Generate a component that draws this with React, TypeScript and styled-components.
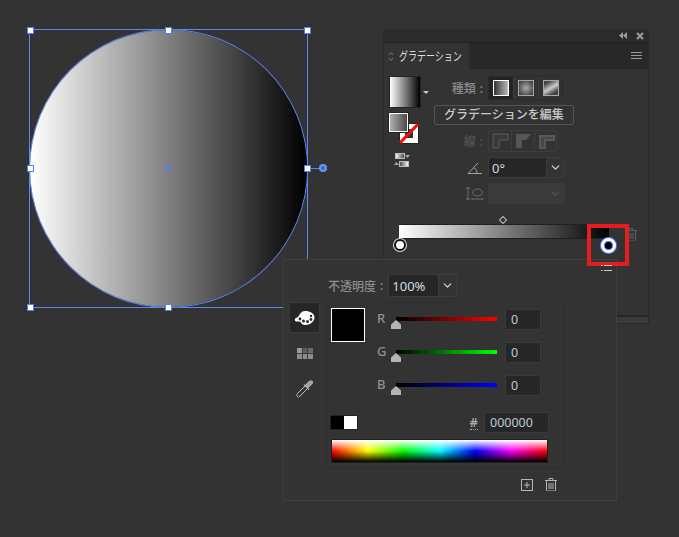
import React from "react";
import styled, { createGlobalStyle } from "styled-components";
import { ChevronDown } from "lucide-react";

const FONT = `"Noto Sans", "Noto Sans CJK JP", sans-serif`;
const SWATCH_GRADIENT = "linear-gradient(to right, #fff 0%, #000 100%)";

const GlobalStyle = createGlobalStyle`
	html, body {
		margin: 0;
		background: #333333;
		overflow: hidden;
	}
	* {
		box-sizing: border-box;
	}
`;

const Stage = styled.div`
	position: relative;
	width: 679px;
	height: 537px;
	background: #333333;
	font-family: ${FONT};
	overflow: hidden;
`;

/* artwork on the canvas */
const Selection = styled.div`
	position: absolute;
	left: 30px;
	top: 30px;
	width: 277px;
	height: 277px;
	outline: 1px solid #5b86f5;
`;

const Circle = styled.div`
	width: 100%;
	height: 100%;
	border-radius: 50%;
	background: ${SWATCH_GRADIENT};
	box-shadow: 0 0 0 1px #5b86f5;
`;

const Handle = styled.span<{ $x: number; $y: number }>`
	position: absolute;
	left: ${({ $x }) => $x}%;
	top: ${({ $y }) => $y}%;
	width: 7px;
	height: 7px;
	margin: -3.5px 0 0 -3.5px;
	background: #fff;
	border: 1px solid #4f7ef8;
`;

const CenterDot = styled.span`
	position: absolute;
	left: 50%;
	top: 50%;
	width: 5px;
	height: 5px;
	margin: -2.5px 0 0 -2.5px;
	border-radius: 50%;
	background: #4f7ef8;
`;

const RotateLine = styled.span`
	position: absolute;
	left: 280px;
	top: 138px;
	width: 10px;
	height: 1px;
	background: #5b86f5;
`;

const RotateKnob = styled.span`
	position: absolute;
	left: 289px;
	top: 134px;
	width: 8px;
	height: 8px;
	border-radius: 50%;
	background: #3f66c8;
	border: 2px solid #6f97fa;
`;

/* gradient panel */
const Panel = styled.section`
	position: absolute;
	left: 383px;
	top: 29px;
	width: 266px;
	height: 295px;
	display: flex;
	flex-direction: column;
	background: #333333;
	border: 1px solid #292929;
	border-top: 0;
`;

const TitleBar = styled.div`
	height: 13px;
	flex: none;
	display: flex;
	align-items: center;
	justify-content: flex-end;
	gap: 9px;
	padding-right: 4px;
	background: #2b2b2b;
`;

const TabRow = styled.div`
	height: 27px;
	flex: none;
	display: flex;
	align-items: stretch;
	justify-content: space-between;
	background: #282828;
	border-top: 1px solid #222;
`;

const Tab = styled.div`
	width: 85px;
	display: flex;
	align-items: center;
	gap: 5px;
	padding-left: 4px;
	background: #333333;
`;

const TabArrows = styled.svg`
	flex: none;
`;

const TabTitle = styled.span`
	display: inline-block;
	width: 63px;
	font-size: 12px;
	color: #dcdcdc;
	white-space: nowrap;
	transform: scaleX(0.75);
	transform-origin: left center;
`;

const MenuButton = styled.div`
	display: flex;
	align-items: center;
	padding-right: 6px;
`;

const PanelBody = styled.div`
	flex: 1;
	padding: 7px 0 0 5px;
`;

const TopArea = styled.div`
	display: flex;
`;

const SwatchColumn = styled.div`
	width: 45px;
	flex: none;
	display: flex;
	flex-direction: column;
`;

const BigSwatchRow = styled.div`
	display: flex;
	align-items: center;
	gap: 2px;
`;

const BigSwatch = styled.div`
	width: 32px;
	height: 32px;
	background: ${SWATCH_GRADIENT};
	border: 1px solid #222;
`;

const Caret = styled.span`
	width: 0;
	height: 0;
	border-left: 3px solid transparent;
	border-right: 3px solid transparent;
	border-top: 3px solid #c8c8c8;
`;

const FillStroke = styled.div`
	position: relative;
	width: 31px;
	height: 31px;
	margin-top: 5px;
`;

const FillBox = styled.div`
	position: absolute;
	left: 0;
	top: 0;
	z-index: 1;
	width: 19px;
	height: 19px;
	background: linear-gradient(to right, #b0b0b0, #4a4a4a);
	border: 1px solid #fff;
	box-shadow: 0 0 0 1px #222;
`;

const StrokeBox = styled.svg`
	position: absolute;
	left: 10px;
	top: 10px;
`;

const ReverseIcon = styled.svg`
	display: block;
	margin: 9px 0 0 5px;
`;

const ControlGrid = styled.div`
	display: grid;
	grid-template-columns: 52px auto;
	column-gap: 2px;
	row-gap: 5px;
	justify-content: start;
`;

const Label = styled.div<{ $dim?: boolean }>`
	display: flex;
	align-items: center;
	justify-content: flex-end;
	gap: 4px;
	padding-right: 3px;
	font-size: 12px;
	font-weight: 500;
	color: ${({ $dim }) => ($dim ? "#555" : "#8c8c8c")};
	white-space: nowrap;
`;

const IconLabel = styled.div`
	display: flex;
	align-items: center;
	justify-content: flex-end;
	padding-right: 3px;
`;

const ButtonGroup = styled.div<{ $dim?: boolean }>`
	display: flex;
	width: fit-content;
	border: 1px solid ${({ $dim }) => ($dim ? "#3d3d3d" : "#2b2b2b")};
	border-radius: 2px;
`;

const TypeButton = styled.div<{ $active?: boolean; $height: number; $width: number }>`
	width: ${({ $width }) => $width}px;
	height: ${({ $height }) => $height}px;
	display: flex;
	align-items: center;
	justify-content: center;
	background: ${({ $active }) => ($active ? "#232323" : "transparent")};
	& + & {
		border-left: 1px solid #3d3d3d;
	}
`;

const TypeIcon = styled.div<{ $fill: string; $active?: boolean }>`
	width: 16px;
	height: 16px;
	border: 1px solid ${({ $active }) => ($active ? "#fff" : "#a8a8a8")};
	background: ${({ $fill }) => $fill};
`;

const EditButton = styled.div`
	grid-column: 1 / span 2;
	width: 140px;
	height: 20px;
	display: flex;
	align-items: center;
	justify-content: center;
	font-size: 12px;
	font-weight: 500;
	line-height: 1;
	color: #c9c9c9;
	border: 1px solid #555;
	border-radius: 2px;
`;

const Combo = styled.div<{ $width: number; $height: number; $disabled?: boolean }>`
	width: ${({ $width }) => $width}px;
	height: ${({ $height }) => $height}px;
	display: flex;
	background: ${({ $disabled }) => ($disabled ? "#3a3a3a" : "#262626")};
	border: 1px solid ${({ $disabled }) => ($disabled ? "#3a3a3a" : "#3c3c3c")};
	border-radius: 2px;
`;

const ComboValue = styled.div`
	flex: 1;
	display: flex;
	align-items: center;
	padding-left: 3px;
	font-size: 13px;
	color: #cfdce6;
`;

const ComboArrow = styled.div<{ $disabled?: boolean }>`
	width: 18px;
	display: flex;
	align-items: center;
	justify-content: center;
	color: ${({ $disabled }) => ($disabled ? "#555" : "#d0d0d0")};
	background: ${({ $disabled }) => ($disabled ? "transparent" : "#333")};
	border-left: 1px solid ${({ $disabled }) => ($disabled ? "transparent" : "#3c3c3c")};
`;

const RampRow = styled.div`
	display: flex;
	gap: 16px;
	margin: 20px 0 0 10px;
`;

const Ramp = styled.div`
	position: relative;
	width: 210px;
	height: 15px;
	background: ${SWATCH_GRADIENT};
	border-top: 1px solid #1f1f1f;
	border-bottom: 1px solid #1f1f1f;
`;

const Midpoint = styled.span`
	position: absolute;
	left: 101px;
	top: -8px;
	width: 6px;
	height: 6px;
	transform: rotate(45deg);
	border: 1px solid #bdbdbd;
`;

const Stop = styled.span<{ $active?: boolean }>`
	position: absolute;
	border-radius: 50%;
	${({ $active }) =>
		$active
			? `left: 201.5px; top: 12.5px; width: 15px; height: 15px; background: #000; border: 3px solid #fff; box-shadow: 0 0 0 1px #4f7ef8, inset 0 0 0 1px #4f7ef8;`
			: `left: -5px; top: 14px; width: 12px; height: 12px; background: #fff; border: 2px solid #111; box-shadow: 0 0 0 1px #ddd;`}
`;

const DimTrash = styled.svg`
	flex: none;
	margin-top: 4px;
	color: #5c5c5c;
`;

const PanelFooter = styled.div`
	height: 8px;
	flex: none;
	margin-left: 233px;
	border-top: 2px solid #262626;
	background: #3a3a3a;
`;

/* color popup */
const Popup = styled.section`
	position: absolute;
	left: 283px;
	top: 259px;
	width: 334px;
	height: 242px;
	padding-top: 14px;
	background: #333333;
	border: 1px solid #3e3e3e;
`;

const OpacityRow = styled.div`
	display: flex;
	align-items: center;
	gap: 2px;
	margin: 0 0 5px 44px;
`;

const PopupMain = styled.div`
	display: flex;
	gap: 6px;
	padding-left: 5px;
`;

const SideTabs = styled.div`
	width: 31px;
	flex: none;
	display: flex;
	flex-direction: column;
	align-items: center;
`;

const PaletteTab = styled.div`
	width: 31px;
	height: 31px;
	display: flex;
	align-items: center;
	justify-content: center;
	background: #262626;
	border: 1px solid #3a3a3a;
	border-radius: 2px;
`;

const GridIcon = styled.svg`
	margin-top: 15px;
`;

const DropperIcon = styled.svg`
	margin-top: 20px;
`;

const ColorBox = styled.div`
	width: 238px;
	height: 166px;
	padding: 5px 0 0 4px;
	border: 1px solid #2e2e2e;
`;

const ColorTop = styled.div`
	display: flex;
	gap: 12px;
`;

const CurrentColor = styled.div`
	width: 34px;
	height: 34px;
	flex: none;
	background: #000;
	border: 1px solid #fff;
`;

const Channels = styled.div`
	display: flex;
	flex-direction: column;
	gap: 12px;
	margin-top: 1px;
`;

const ChannelRow = styled.div`
	display: flex;
	align-items: center;
	height: 21px;
`;

const ChannelName = styled.div`
	width: 19px;
	font-size: 13px;
	font-weight: 500;
	color: #87929a;
	margin-top: -3px;
`;

const Track = styled.div<{ $color: string }>`
	position: relative;
	width: 101px;
	height: 4px;
	margin: -2px 8px 0 0;
	background: linear-gradient(to right, #000, ${({ $color }) => $color});
`;

const Thumb = styled.svg`
	position: absolute;
	left: -5px;
	top: 3px;
`;

const NumberField = styled.div<{ $width: number }>`
	width: ${({ $width }) => $width}px;
	height: 21px;
	display: flex;
	align-items: center;
	padding-left: 5px;
	font-size: 12.5px;
	color: #b9cbd8;
	background: #262626;
	border: 1px solid #3a3a3a;
	border-radius: 2px;
`;

const HexRow = styled.div`
	display: flex;
	align-items: center;
	justify-content: space-between;
	margin: 16px 14px 0 -1px;
`;

const MiniSwatches = styled.div`
	display: flex;
	border: 1px solid #222;
`;

const MiniSwatch = styled.span<{ $color: string }>`
	width: 13px;
	height: 13px;
	background: ${({ $color }) => $color};
`;

const HexField = styled.div`
	display: flex;
	align-items: center;
	gap: 6px;
`;

const HashMark = styled.span`
	font-size: 13px;
	font-weight: 600;
	line-height: 14px;
	color: #a8a8a8;
	border-bottom: 1px dotted #a8a8a8;
`;

const Spectrum = styled.div`
	width: 217px;
	height: 24px;
	margin-top: 6px;
	border: 1px solid #222;
	background:
		linear-gradient(to bottom, #fff 0%, rgba(255, 255, 255, 0) 50%, rgba(0, 0, 0, 0) 50%, #000 100%),
		linear-gradient(to right, #f00, #ff0 16.6%, #0f0 33.3%, #0ff 50%, #00f 66.6%, #f0f 83.3%, #f00);
`;

const PopupFooter = styled.div`
	display: flex;
	justify-content: flex-end;
	align-items: center;
	gap: 12px;
	margin-top: 10px;
	padding-right: 59px;
	color: #b5b5b5;
`;

/* callout drawn over the screenshot */
const Callout = styled.div`
	position: absolute;
	left: 587px;
	top: 224px;
	width: 42px;
	height: 42px;
	border: 4px solid #e51c20;
`;

const ListIcon = styled.svg`
	position: absolute;
	left: 601px;
	top: 265px;
`;

function StrokeSwatch() {
	return (
		<StrokeBox width="20" height="21" viewBox="0 0 20 21">
			<rect x="0.5" y="0.5" width="19" height="20" fill="#fff" stroke="#222" />
			<rect x="6" y="6" width="8" height="9" fill="#333" />
			<line x1="1" y1="20" x2="19" y2="1" stroke="#f01010" strokeWidth="3" />
		</StrokeBox>
	);
}

function Reverse() {
	return (
		<ReverseIcon width="16" height="15" viewBox="0 0 16 15">
			<defs>
				<linearGradient id="rev1">
					<stop offset="0" stopColor="#fff" />
					<stop offset="1" stopColor="#444" />
				</linearGradient>
				<linearGradient id="rev2">
					<stop offset="0" stopColor="#444" />
					<stop offset="1" stopColor="#fff" />
				</linearGradient>
			</defs>
			<rect x="1.5" y="0.5" width="9" height="5" fill="url(#rev1)" stroke="#bbb" />
			<path d="M11 2h5l-2.500 3z" fill="#aaa" />
			<rect x="5.5" y="8.500" width="9" height="5" fill="url(#rev2)" stroke="#bbb" />
			<path d="M0 12h5l-2.500-3z" fill="#aaa" />
		</ReverseIcon>
	);
}

function CornerIcon({ variant }: { variant: number }) {
	const paths = [
		<path key="a" d="M2 16V2h15v6H8v8z" fill="#3a3a3a" stroke="#5c5c5c" />,
		<path key="b" d="M2 16V2h15l-5 6H8v8z" fill="#565656" />,
		<path key="c" d="M3 16V4h14v4H8v8z" fill="#484848" stroke="#585858" strokeWidth="2" />,
	];
	return (
		<svg width="18" height="18" viewBox="0 0 18 18">
			{paths[variant]}
		</svg>
	);
}

function AngleIcon() {
	return (
		<svg width="16" height="12" viewBox="0 0 16 12" fill="none" stroke="#a0a0a0">
			<path d="M1 11.500h14M1 11.500L11 1" />
			<path d="M7 6c2 1 3 3 3 5.500" />
		</svg>
	);
}

function AspectIcon() {
	return (
		<svg width="18" height="15" viewBox="0 0 18 15" fill="none" stroke="#6d6d6d">
			<path d="M3 1v13M1 3l2-2 2 2M1 12l2 2 2-2" />
			<ellipse cx="12.500" cy="6.500" rx="5" ry="3.500" />
			<path d="M7 13h11M7 12v2M17.500 12v2" />
		</svg>
	);
}

function PaletteIcon() {
	return (
		<svg width="21" height="16" viewBox="0 0 21 16">
			<path
				d="M11 1c5 0 9.500 2.500 9.500 6.500S16 15 11 15c-2.500 0-3-1-4-2.500C6 11 4 11.500 2.500 11.500 1 11.500 0.500 10.500 1 9c.5-1.500 2-1 3-2 2-2.500 3-6 7-6z"
				fill="#fff"
			/>
			<circle cx="6" cy="9" r="1.400" fill="#2a2a2a" />
			<circle cx="9.500" cy="11" r="1.500" fill="#2a2a2a" />
			<circle cx="13.500" cy="11.500" r="1.500" fill="#2a2a2a" />
			<circle cx="17" cy="9.500" r="1.400" fill="#2a2a2a" />
			<circle cx="17" cy="6" r="1.200" fill="#2a2a2a" />
		</svg>
	);
}

function SwatchGrid() {
	return (
		<GridIcon width="16" height="11" viewBox="0 0 16 11" shapeRendering="crispEdges">
			<rect width="16" height="11" fill="#3a3a3a" />
			<rect x="0" y="0" width="5" height="5" fill="#9a9a9a" />
			<rect x="6" y="0" width="4" height="5" fill="#5e5e5e" />
			<rect x="11" y="0" width="5" height="5" fill="#6a6a6a" />
			<rect x="0" y="6" width="5" height="5" fill="#8c8c8c" />
			<rect x="6" y="6" width="4" height="5" fill="#8c8c8c" />
			<rect x="11" y="6" width="5" height="5" fill="#8c8c8c" />
		</GridIcon>
	);
}

function Dropper() {
	return (
		<DropperIcon width="18" height="19" viewBox="0 0 18 19">
			<path d="M1.500 17.500c-1-1-.8-2 0-3L9 7l2.500 2.500-7.500 7.500c-1 1-1.600 1.400-2.500.5z" fill="none" stroke="#c0c0c0" />
			<path d="M9 6l3-3c1-1 3-2.500 4.500-1s0 3-1 4l-3 3 1 1-1 1-5-5 1-1z" fill="#a4a4a4" />
		</DropperIcon>
	);
}

function TrashPaths() {
	return (
		<>
			<path d="M0 2.500h12M4 2.500V.5h4v2M1.500 2.500V12a1 1 0 0 0 1 1h7a1 1 0 0 0 1-1V2.500" />
			<path d="M4 5v6M6 5v6M8 5v6" />
		</>
	);
}

function ChannelSlider({ name, color }: { name: string; color: string }) {
	return (
		<ChannelRow>
			<ChannelName>{name}</ChannelName>
			<Track $color={color}>
				<Thumb width="10" height="9" viewBox="0 0 10 9">
					<path d="M5 0l5 4.500V9H0V4.500z" fill="#b4b4b4" />
				</Thumb>
			</Track>
			<NumberField $width={36}>0</NumberField>
		</ChannelRow>
	);
}

export default function App() {
	return (
		<Stage>
			<GlobalStyle />

			<Selection>
				<Circle />
				<CenterDot />
				<RotateLine />
				<RotateKnob />
				{[0, 50, 100].map((y) =>
					[0, 50, 100].map((x) => (x === 50 && y === 50 ? null : <Handle key={`${x}-${y}`} $x={x} $y={y} />))
				)}
			</Selection>

			<Panel>
				<TitleBar>
					<svg width="8" height="7" viewBox="0 0 8 7" fill="#9a9a9a">
						<path d="M4 0v7L0 3.500zM8 0v7L4 3.500z" />
					</svg>
					<svg width="8" height="8" viewBox="0 0 8 8" stroke="#9a9a9a" strokeWidth="2.200">
						<path d="M1 1l6 6M7 1l-6 6" />
					</svg>
				</TitleBar>
				<TabRow>
					<Tab>
						<TabArrows width="6" height="11" viewBox="0 0 6 11" fill="none" stroke="#777">
							<path d="M1 4l2-2.500L5 4M1 7l2 2.500L5 7" />
						</TabArrows>
						<TabTitle>グラデーション</TabTitle>
					</Tab>
					<MenuButton>
						<svg width="11" height="8" viewBox="0 0 11 8" stroke="#9a9a9a">
							<path d="M0 .5h11M0 3.500h11M0 6.500h11" />
						</svg>
					</MenuButton>
				</TabRow>

				<PanelBody>
					<TopArea>
						<SwatchColumn>
							<BigSwatchRow>
								<BigSwatch />
								<Caret />
							</BigSwatchRow>
							<FillStroke>
								<FillBox />
								<StrokeSwatch />
							</FillStroke>
							<Reverse />
						</SwatchColumn>

						<ControlGrid>
							<Label>
								<span>種類</span>
								<span>:</span>
							</Label>
							<ButtonGroup>
								<TypeButton $active $width={24} $height={22}>
									<TypeIcon $active $fill="linear-gradient(to right, #333, #bbb)" />
								</TypeButton>
								<TypeButton $width={25} $height={22}>
									<TypeIcon $fill="radial-gradient(circle, #aaa 0%, #333 100%)" />
								</TypeButton>
								<TypeButton $width={24} $height={22}>
									<TypeIcon $fill="linear-gradient(150deg, #444 15%, #ccc 50%, #444 80%)" />
								</TypeButton>
							</ButtonGroup>

							<EditButton>グラデーションを編集</EditButton>

							<Label $dim>
								<span>線</span>
								<span>:</span>
							</Label>
							<ButtonGroup $dim>
								<TypeButton $width={22} $height={20}>
									<CornerIcon variant={0} />
								</TypeButton>
								<TypeButton $width={23} $height={20}>
									<CornerIcon variant={1} />
								</TypeButton>
								<TypeButton $width={22} $height={20}>
									<CornerIcon variant={2} />
								</TypeButton>
							</ButtonGroup>

							<IconLabel>
								<AngleIcon />
							</IconLabel>
							<Combo $width={77} $height={21}>
								<ComboValue>0°</ComboValue>
								<ComboArrow>
									<ChevronDown size={13} strokeWidth={2.5} />
								</ComboArrow>
							</Combo>

							<IconLabel>
								<AspectIcon />
							</IconLabel>
							<Combo $width={77} $height={21} $disabled>
								<ComboValue />
								<ComboArrow $disabled>
									<ChevronDown size={13} strokeWidth={2.5} />
								</ComboArrow>
							</Combo>
						</ControlGrid>
					</TopArea>

					<RampRow>
						<Ramp>
							<Midpoint />
							<Stop />
							<Stop $active />
						</Ramp>
						<DimTrash width="12" height="13" viewBox="0 0 12 13" fill="none" stroke="currentColor">
							<TrashPaths />
						</DimTrash>
					</RampRow>
				</PanelBody>
				<PanelFooter />
			</Panel>

			<Popup>
				<OpacityRow>
					<Label>
						<span>不透明度</span>
						<span>:</span>
					</Label>
					<Combo $width={69} $height={23}>
						<ComboValue>100%</ComboValue>
						<ComboArrow>
							<ChevronDown size={13} strokeWidth={2.5} />
						</ComboArrow>
					</Combo>
				</OpacityRow>

				<PopupMain>
					<SideTabs>
						<PaletteTab>
							<PaletteIcon />
						</PaletteTab>
						<SwatchGrid />
						<Dropper />
					</SideTabs>

					<ColorBox>
						<ColorTop>
							<CurrentColor />
							<Channels>
								<ChannelSlider name="R" color="#ff0000" />
								<ChannelSlider name="G" color="#00ff00" />
								<ChannelSlider name="B" color="#0000ff" />
							</Channels>
						</ColorTop>
						<HexRow>
							<MiniSwatches>
								<MiniSwatch $color="#000" />
								<MiniSwatch $color="#fff" />
							</MiniSwatches>
							<HexField>
								<HashMark>#</HashMark>
								<NumberField $width={65}>000000</NumberField>
							</HexField>
						</HexRow>
						<Spectrum />
					</ColorBox>
				</PopupMain>

				<PopupFooter>
					<svg width="12" height="12" viewBox="0 0 12 12" fill="none" stroke="currentColor">
						<rect x="0.5" y="0.5" width="11" height="11" />
						<path d="M6 3v6M3 6h6" />
					</svg>
					<svg width="12" height="13" viewBox="0 0 12 13" fill="none" stroke="currentColor">
						<TrashPaths />
					</svg>
				</PopupFooter>
			</Popup>

			<Callout />
			<ListIcon width="11" height="6" viewBox="0 0 11 6" stroke="#c8c8c8">
				<path d="M3 .5h8M3 5.500h8M0 .5h1.500M0 5.500h1.500" />
			</ListIcon>
		</Stage>
	);
}
